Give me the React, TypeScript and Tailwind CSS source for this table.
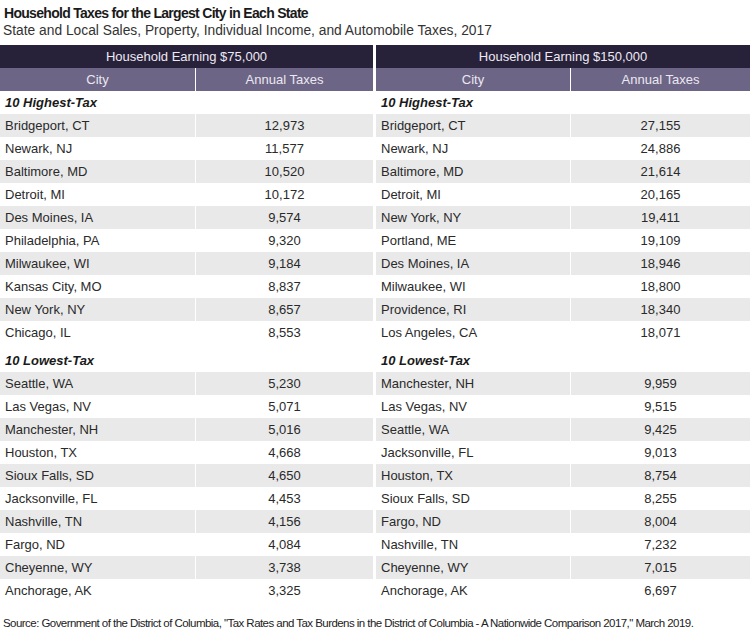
const left = {
  title: 'Household Earning $75,000',
  high: [
    ['Bridgeport, CT', '12,973'],
    ['Newark, NJ', '11,577'],
    ['Baltimore, MD', '10,520'],
    ['Detroit, MI', '10,172'],
    ['Des Moines, IA', '9,574'],
    ['Philadelphia, PA', '9,320'],
    ['Milwaukee, WI', '9,184'],
    ['Kansas City, MO', '8,837'],
    ['New York, NY', '8,657'],
    ['Chicago, IL', '8,553'],
  ],
  low: [
    ['Seattle, WA', '5,230'],
    ['Las Vegas, NV', '5,071'],
    ['Manchester, NH', '5,016'],
    ['Houston, TX', '4,668'],
    ['Sioux Falls, SD', '4,650'],
    ['Jacksonville, FL', '4,453'],
    ['Nashville, TN', '4,156'],
    ['Fargo, ND', '4,084'],
    ['Cheyenne, WY', '3,738'],
    ['Anchorage, AK', '3,325'],
  ],
};

const right = {
  title: 'Household Earning $150,000',
  high: [
    ['Bridgeport,  CT', '27,155'],
    ['Newark, NJ', '24,886'],
    ['Baltimore, MD', '21,614'],
    ['Detroit, MI', '20,165'],
    ['New York, NY', '19,411'],
    ['Portland, ME', '19,109'],
    ['Des Moines, IA', '18,946'],
    ['Milwaukee, WI', '18,800'],
    ['Providence, RI', '18,340'],
    ['Los Angeles, CA', '18,071'],
  ],
  low: [
    ['Manchester, NH', '9,959'],
    ['Las Vegas, NV', '9,515'],
    ['Seattle, WA', '9,425'],
    ['Jacksonville, FL', '9,013'],
    ['Houston, TX', '8,754'],
    ['Sioux Falls, SD', '8,255'],
    ['Fargo, ND', '8,004'],
    ['Nashville, TN', '7,232'],
    ['Cheyenne, WY', '7,015'],
    ['Anchorage, AK', '6,697'],
  ],
};

type Side = typeof left;

const Section = ({ label, rows, tall }: { label: string; rows: string[][]; tall?: boolean }) => (
  <>
    <div className={`col-span-2 ${tall ? 'h-[28px] pt-[5px]' : 'h-[23px]'} leading-[23px] pl-[5px] font-bold italic text-[13px] text-[#1a1a1a]`}>{label}</div>
    {rows.map(([city, amt], i) => (
      <div key={city + i} className="contents">
        <div className={`h-[23px] leading-[23px] pl-[5px] border-r border-white ${i % 2 === 0 ? 'bg-[#e9e9e9]' : 'bg-white'}`}>{city}</div>
        <div className={`h-[23px] leading-[23px] text-center ${i % 2 === 0 ? 'bg-[#e9e9e9]' : 'bg-white'}`}>{amt}</div>
      </div>
    ))}
  </>
);

const Table = ({ side, cityW }: { side: Side; cityW: string }) => (
  <div className={`grid ${cityW} text-[13px] text-[#2a2a2a]`}>
    <div className="col-span-2 h-[23px] leading-[23px] bg-[#272139] text-center text-[#eeeaf4]">{side.title}</div>
    <div className="h-[23px] leading-[23px] bg-[#6d6585] text-center text-[#ebe8f1] border-r border-white">City</div>
    <div className="h-[23px] leading-[23px] bg-[#6d6585] text-center text-[#ebe8f1]">Annual Taxes</div>
    <Section label="10 Highest-Tax" rows={side.high} />
    <Section label="10 Lowest-Tax" rows={side.low} tall />
  </div>
);

const App = () => {
  return (
    <div className="w-[750px] h-[639px] bg-white overflow-hidden" style={{ fontFamily: '"Liberation Sans", Arial, sans-serif' }}>
      <div className="pt-[4px] px-[4px] h-[22px] leading-[18px] text-[14px] font-bold text-[#1a1a1a] tracking-[-0.7px]">
        Household Taxes for the Largest City in Each State
      </div>
      <div className="px-[3px] h-[17px] leading-[17px] text-[13.8px] text-[#333]">
        State and Local Sales, Property, Individual Income, and Automobile Taxes, 2017
      </div>
      <div className="mt-[6px] flex gap-[3px]">
        <div className="w-[373px]">
          <Table side={left} cityW="grid-cols-[196px_1fr]" />
        </div>
        <div className="flex-1">
          <Table side={right} cityW="grid-cols-[195px_1fr]" />
        </div>
      </div>
      <div className="mt-[12px] px-[3px] h-[18px] leading-[18px] text-[11.5px] tracking-[-0.55px] text-[#222] whitespace-nowrap">
        Source: Government of the District of Columbia, "Tax Rates and Tax Burdens in the District of Columbia - A Nationwide Comparison 2017," March 2019.
      </div>
    </div>
  );
};

export default App;
